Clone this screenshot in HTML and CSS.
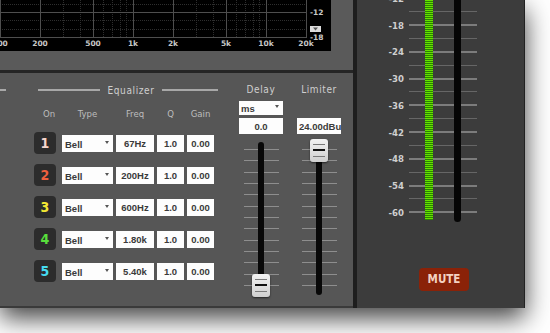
FILE: index.html
```html
<!DOCTYPE html>
<html lang="en">
<head>
<meta charset="UTF-8">
<title>Output Processing</title>
<link rel="stylesheet" href="styles.css">
</head>
<body>

<div class="app">
    <div class="main">
        <div class="top-panel">
            <svg class="graph" width="331" height="51" viewBox="0 0 331 51">
                <rect width="331" height="51" fill="#000"/>
                <g stroke="#2e2e2e" stroke-width="1" stroke-dasharray="1 1">
                    <line x1="63.5" y1="0" x2="63.5" y2="37"/>
                    <line x1="80.5" y1="0" x2="80.5" y2="37"/>
                    <line x1="103.5" y1="0" x2="103.5" y2="37"/>
                    <line x1="112.5" y1="0" x2="112.5" y2="37"/>
                    <line x1="120.5" y1="0" x2="120.5" y2="37"/>
                    <line x1="126.5" y1="0" x2="126.5" y2="37"/>
                    <line x1="196.5" y1="0" x2="196.5" y2="37"/>
                    <line x1="213.5" y1="0" x2="213.5" y2="37"/>
                    <line x1="236.5" y1="0" x2="236.5" y2="37"/>
                    <line x1="245.5" y1="0" x2="245.5" y2="37"/>
                    <line x1="253.5" y1="0" x2="253.5" y2="37"/>
                    <line x1="259.5" y1="0" x2="259.5" y2="37"/>
                    <line x1="0" y1="4.5" x2="307" y2="4.5"/>
                    <line x1="0" y1="20.5" x2="307" y2="20.5"/>
                    <line x1="0" y1="29.5" x2="307" y2="29.5"/>
                </g>
                <g stroke="#4e4e4e" stroke-width="1">
                    <line x1="0.5" y1="0" x2="0.5" y2="37"/>
                    <line x1="40.5" y1="0" x2="40.5" y2="37"/>
                    <line x1="93.5" y1="0" x2="93.5" y2="37"/>
                    <line x1="133.5" y1="0" x2="133.5" y2="37"/>
                    <line x1="173.5" y1="0" x2="173.5" y2="37"/>
                    <line x1="226.5" y1="0" x2="226.5" y2="37"/>
                    <line x1="266.5" y1="0" x2="266.5" y2="37"/>
                    <line x1="306.5" y1="0" x2="306.5" y2="37"/>
                    <line x1="0" y1="12.5" x2="307" y2="12.5"/>
                    <line x1="0" y1="37.5" x2="307" y2="37.5"/>
                </g>
                <g class="axis" text-anchor="middle">
                    <text x="0" y="46">100</text>
                    <text x="40" y="46">200</text>
                    <text x="93" y="46">500</text>
                    <text x="133" y="46">1k</text>
                    <text x="173" y="46">2k</text>
                    <text x="226" y="46">5k</text>
                    <text x="266" y="46">10k</text>
                    <text x="306" y="46">20k</text>
                </g>
                <g class="axis">
                    <text x="310" y="15">-12</text>
                    <text x="310" y="40">-18</text>
                </g>
                <rect x="310" y="26" width="11" height="6" fill="#dcdcdc"/>
                <polygon points="313,27.5 318,27.5 315.5,30.5" fill="#555"/>
            </svg>
        </div>

        <div class="lower-panel">
            <div class="eq">
                <div class="heading">
                    <span class="rule stub"></span>
                    <span class="rule rule-left"></span>
                    <span class="heading-text">Equalizer</span>
                    <span class="rule rule-right"></span>
                </div>

                <div class="eq-grid eq-head">
                    <span>On</span>
                    <span>Type</span>
                    <span>Freq</span>
                    <span>Q</span>
                    <span>Gain</span>
                </div>

                <div class="eq-grid eq-rows">
                    <span class="band band-1">1</span>
                    <span class="field select">Bell<i class="arrow"></i></span>
                    <span class="field">67Hz</span>
                    <span class="field">1.0</span>
                    <span class="field">0.00</span>

                    <span class="band band-2">2</span>
                    <span class="field select">Bell<i class="arrow"></i></span>
                    <span class="field">200Hz</span>
                    <span class="field">1.0</span>
                    <span class="field">0.00</span>

                    <span class="band band-3">3</span>
                    <span class="field select">Bell<i class="arrow"></i></span>
                    <span class="field">600Hz</span>
                    <span class="field">1.0</span>
                    <span class="field">0.00</span>

                    <span class="band band-4">4</span>
                    <span class="field select">Bell<i class="arrow"></i></span>
                    <span class="field">1.80k</span>
                    <span class="field">1.0</span>
                    <span class="field">0.00</span>

                    <span class="band band-5">5</span>
                    <span class="field select">Bell<i class="arrow"></i></span>
                    <span class="field">5.40k</span>
                    <span class="field">1.0</span>
                    <span class="field">0.00</span>
                </div>
            </div>

            <div class="strip delay">
                <div class="strip-title">Delay</div>
                <div class="field select unit">ms<i class="arrow"></i></div>
                <div class="field value">0.0</div>
                <div class="slider">
                    <div class="ticks">
                        <i></i><i></i><i></i><i></i><i></i><i></i><i></i>
                        <i></i><i></i><i></i><i></i><i></i><i></i>
                    </div>
                    <div class="track"></div>
                    <div class="thumb thumb-low"></div>
                </div>
            </div>

            <div class="strip limiter">
                <div class="strip-title">Limiter</div>
                <div class="field value value-left no-unit">24.00dBu</div>
                <div class="slider">
                    <div class="ticks">
                        <i></i><i></i><i></i><i></i><i></i><i></i><i></i>
                        <i></i><i></i><i></i><i></i><i></i><i></i>
                    </div>
                    <div class="track"></div>
                    <div class="thumb thumb-high"></div>
                </div>
            </div>
        </div>
    </div>

    <div class="out-panel">
        <div class="meter">
            <div class="mrow major"><span>-12</span><i></i></div>
            <div class="mrow"><span></span><i></i></div>
            <div class="mrow major"><span>-18</span><i></i></div>
            <div class="mrow"><span></span><i></i></div>
            <div class="mrow major"><span>-24</span><i></i></div>
            <div class="mrow"><span></span><i></i></div>
            <div class="mrow major"><span>-30</span><i></i></div>
            <div class="mrow"><span></span><i></i></div>
            <div class="mrow major"><span>-36</span><i></i></div>
            <div class="mrow"><span></span><i></i></div>
            <div class="mrow major"><span>-42</span><i></i></div>
            <div class="mrow"><span></span><i></i></div>
            <div class="mrow major"><span>-48</span><i></i></div>
            <div class="mrow"><span></span><i></i></div>
            <div class="mrow major"><span>-54</span><i></i></div>
            <div class="mrow"><span></span><i></i></div>
            <div class="mrow major"><span>-60</span><i></i></div>
            <div class="level"></div>
            <div class="fader"></div>
        </div>
        <div class="mute">MUTE</div>
    </div>
</div>

</body>
</html>
```

FILE: styles.css
```css
body {
    margin: 0;
    width: 550px;
    height: 333px;
    overflow: hidden;
    background: #fff;
    font-family: "Liberation Sans", Arial, sans-serif;
}
.app {
    display: flex;
    width: 525px;
    height: 308px;
    box-shadow: 0 10px 24px rgba(0, 0, 0, 0.75);
}
.main {
    width: 353px;
    display: flex;
    flex-direction: column;
    background: #555;
}
.top-panel {
    height: 70px;
    background: #5a5a5a;
    border-bottom: 3px solid #252525;
}
.graph {
    display: block;
}
.axis text {
    font-family: "DejaVu Sans", sans-serif;
    font-size: 7.5px;
    font-weight: bold;
    fill: #c8c8c8;
}

/* lower part: eq, delay, limiter */
.lower-panel {
    flex: 1;
    display: flex;
    align-items: flex-start;
    padding-top: 10px;
    background: #565656;
    border-bottom: 2px solid #3a3a3a;
}
.heading,
.strip-title,
.eq-head,
.band,
.mute,
.mrow span {
    font-family: "DejaVu Sans Condensed", "DejaVu Sans", sans-serif;
    font-stretch: condensed;
}
.eq {
    width: 218px;
}
.heading {
    display: flex;
    align-items: center;
    height: 14px;
}
.rule {
    height: 2px;
    background: #a8a8a8;
}
.stub {
    width: 6px;
}
.rule-left {
    width: 62px;
    margin-left: 32px;
}
.rule-right {
    width: 56px;
}
.heading-text,
.strip-title {
    font-size: 10px;
    letter-spacing: 0.6px;
    color: #cfcfcf;
}
.heading-text {
    width: 62px;
    text-align: center;
}
.eq-grid {
    display: grid;
    grid-template-columns: 25px 51px 38px 27px 27px;
    column-gap: 3px;
    padding-left: 34px;
}
.eq-head {
    margin-top: 10px;
    height: 12px;
    align-items: center;
    font-size: 9.5px;
    color: #bdbdbd;
}
.eq-head span {
    text-align: center;
}
.eq-head span:first-child {
    text-align: left;
    padding-left: 9px;
}
.eq-rows {
    margin-top: 8px;
    grid-auto-rows: 32px;
    align-items: center;
}
.band {
    width: 22px;
    height: 22px;
    border-radius: 4px;
    background: #2c2c2c;
    display: flex;
    align-items: center;
    justify-content: center;
    font-size: 14px;
    font-weight: bold;
}
.band-1 { color: #f6d6cc; }
.band-2 { color: #f0603e; }
.band-3 { color: #f2e834; }
.band-4 { color: #58e03c; }
.band-5 { color: #46dcf2; }

.field {
    height: 17px;
    background: #fdfdfd;
    display: flex;
    align-items: center;
    justify-content: center;
    font-size: 9.5px;
    font-weight: bold;
    color: #3a3a3a;
    overflow: hidden;
    white-space: nowrap;
}
.select {
    justify-content: space-between;
    padding: 0 4px 0 3px;
    padding-top: 2px;
    box-sizing: border-box;
}
.arrow {
    width: 0;
    height: 0;
    border-left: 2.5px solid transparent;
    border-right: 2.5px solid transparent;
    border-top: 3px solid #555;
    margin-top: -4px;
}

/* delay / limiter strips */
.strip {
    width: 44px;
    display: flex;
    flex-direction: column;
}
.delay {
    margin-left: 21px;
}
.limiter {
    margin-left: 14px;
}
.strip-title {
    height: 14px;
    line-height: 14px;
    text-align: center;
}
.unit {
    margin-top: 4px;
    height: 14px;
    padding-top: 1px;
    padding-left: 2px;
}
.value {
    margin-top: 3px;
    height: 16px;
}
.no-unit {
    margin-top: 21px;
}
.value-left {
    justify-content: flex-start;
    padding-left: 2px;
}
.slider {
    position: relative;
    height: 160px;
    margin-top: 4px;
}
.ticks {
    height: 137px;
    margin: 11px auto 0;
    width: 35px;
    display: flex;
    flex-direction: column;
    justify-content: space-between;
}
.ticks i {
    display: block;
    height: 1px;
    background: #8e8e8e;
}
.track {
    position: absolute;
    left: 19px;
    top: 4px;
    width: 6px;
    height: 153px;
    border-radius: 3px;
    background: #080808;
}
.thumb {
    position: absolute;
    left: 13px;
    width: 18px;
    height: 23px;
    border-radius: 3px;
    box-shadow: 0 1px 2px rgba(0, 0, 0, 0.6);
    background:
        linear-gradient(#7a7a7a, #7a7a7a) center 5px / 12px 1px no-repeat,
        linear-gradient(#111, #111) center 10px / 12px 2px no-repeat,
        linear-gradient(#7a7a7a, #7a7a7a) center 17px / 12px 1px no-repeat,
        linear-gradient(#f2f2f2, #cfcfcf);
}
.thumb-low {
    top: 136px;
}
.thumb-high {
    top: 1px;
}

/* output meter */
.out-panel {
    width: 172px;
    box-sizing: border-box;
    background: #3c3c3c;
    border-left: 4px solid #1e1e1e;
    border-right: 1px solid #222;
    overflow: hidden;
}
.meter {
    position: relative;
    margin-top: -8.4px;
    display: flex;
    flex-direction: column;
}
.mrow {
    height: 13.375px;
    display: flex;
    align-items: center;
}
.mrow span {
    width: 24px;
    margin-left: 23px;
    text-align: right;
    font-size: 9.5px;
    font-weight: bold;
    color: #cfcfcf;
}
.mrow i {
    display: block;
    width: 68px;
    margin-left: 5px;
    height: 1px;
    background: #666;
}
.mrow.major i {
    height: 2px;
    background: #7c7c7c;
}
.level {
    position: absolute;
    left: 68px;
    top: 0;
    width: 8px;
    height: 228px;
    background:
        repeating-linear-gradient(to bottom, #66e000 0 1px, #2b8200 1px 2px);
}
.fader {
    position: absolute;
    left: 97px;
    top: 0;
    width: 7px;
    height: 230px;
    border-radius: 0 0 3.5px 3.5px;
    background: #050505;
}
.mute {
    margin: 49px 0 0 62px;
    width: 50px;
    height: 23px;
    border-radius: 4px;
    background: #8a2208;
    color: #f4d2c2;
    font-size: 11.5px;
    font-weight: bold;
    display: flex;
    align-items: center;
    justify-content: center;
}
```
